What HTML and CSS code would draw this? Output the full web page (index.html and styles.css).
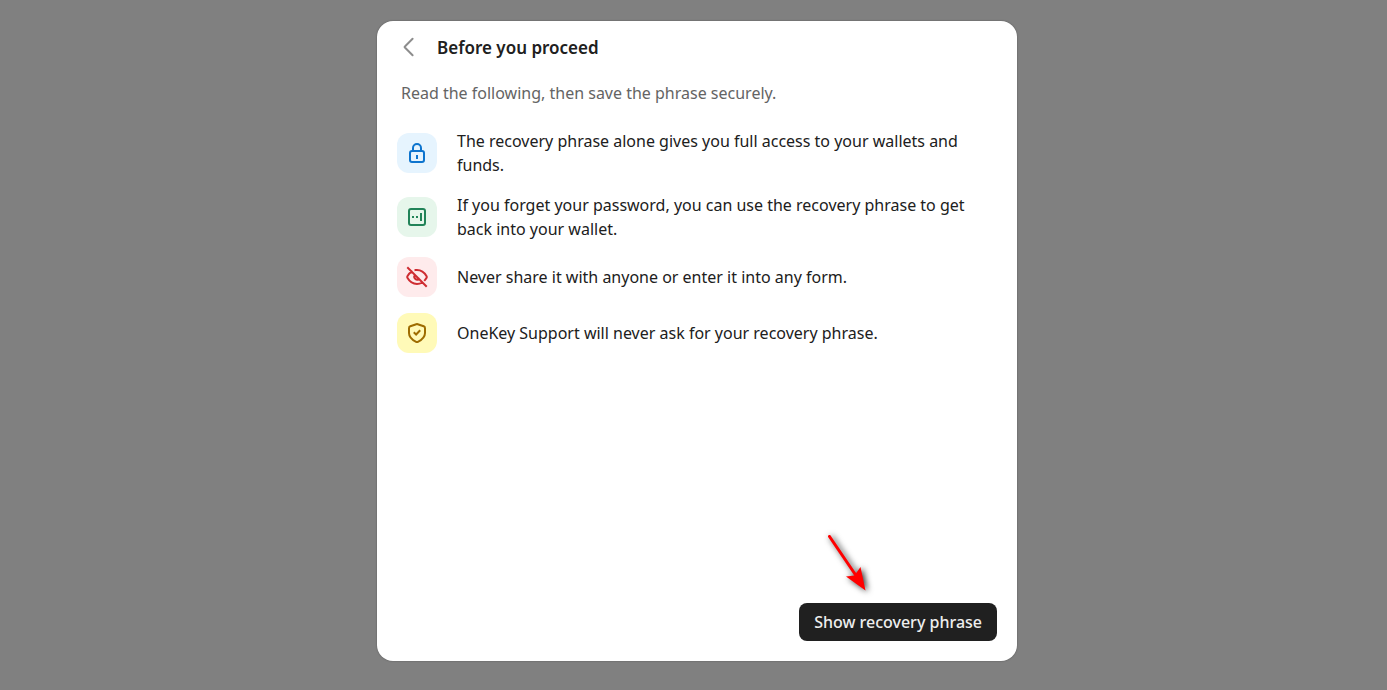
FILE: index.html
```html
<!DOCTYPE html>
<html lang="en">
<head>
<meta charset="utf-8">
<title>Before you proceed</title>
<link rel="stylesheet" href="styles.css">
</head>
<body>
<div class="overlay">
  <main class="dialog">
    <header class="dialog-header">
      <button class="back" type="button" aria-label="Back">
        <svg width="24" height="24" viewBox="0 0 24 24"><path d="M15.600 2.800 7.900 10.400a.8.8 0 0 0 0 1.200l7.700 7.600"/></svg>
      </button>
      <h1 class="title">Before you proceed</h1>
    </header>
    <p class="intro">Read the following, then save the phrase securely.</p>
    <ul class="notes">
      <li class="note">
        <span class="badge blue"><svg width="24" height="24" viewBox="0 0 24 24"><rect x="5" y="10" width="14" height="11" rx="2"/><path d="M8 10V7a4 4 0 0 1 8 0v3M12 15v2"/></svg></span>
        <span class="note-text">The recovery phrase alone gives you full access to your wallets and funds.</span>
      </li>
      <li class="note">
        <span class="badge green"><svg width="24" height="24" viewBox="0 0 24 24"><rect x="4" y="4" width="16" height="16" rx="2"/><path d="M16 9v6"/><path class="dots" d="M7 11h2v2H7zM11 11h2v2h-2z"/></svg></span>
        <span class="note-text">If you forget your password, you can use the recovery phrase to get back into your wallet.</span>
      </li>
      <li class="note">
        <span class="badge red"><svg width="24" height="24" viewBox="0 0 24 24"><path d="M3 3l18 18M6.700 6.700C4.700 7.900 3.300 9.700 2.400 11.200a1.600 1.600 0 0 0 0 1.600C4.100 15.800 7.200 19 12 19c2 0 3.700-.6 5.200-1.500M10.500 5.100C15.900 4.500 19.700 7.900 21.600 11.200a1.600 1.600 0 0 1 0 1.600q-.7 1.200-1.700 2.300M9.900 9.900a3 3 0 0 0 4.200 4.200"/></svg></span>
        <span class="note-text">Never share it with anyone or enter it into any form.</span>
      </li>
      <li class="note">
        <span class="badge yellow"><svg width="24" height="24" viewBox="0 0 24 24"><path d="M11.300 3.200 5.300 5.300A2 2 0 0 0 4 7.200v4.700c0 5 4 7.300 7.100 8.900a2 2 0 0 0 1.800 0c3.100-1.600 7.100-3.900 7.100-8.900V7.200a2 2 0 0 0-1.300-1.900l-6-2.100a2 2 0 0 0-1.400 0ZM9.500 12l1.600 1.500 3.400-3.500"/></svg></span>
        <span class="note-text">OneKey Support will never ask for your recovery phrase.</span>
      </li>
    </ul>
    <footer class="dialog-footer">
      <button class="primary" type="button">Show recovery phrase</button>
      <svg class="pointer" width="60" height="75" viewBox="0 0 60 75" aria-hidden="true"><path class="shaft" d="M14.500 11.500 42 52"/><path class="head" d="M50.500 65.500 31 51.500l8.500-1 6-8.500Z"/></svg>
    </footer>
  </main>
</div>
</body>
</html>
```
FILE: styles.css
```css
* {
  box-sizing: border-box;
}

body {
  margin: 0;
  background: #808080;
  color: #202020;
  font-family: "Noto Sans", "Open Sans", sans-serif;
  font-size: 16px;
  line-height: 24px;
}

svg {
  display: block;
  flex: none;
  fill: none;
  stroke: currentColor;
  stroke-width: 2;
  stroke-linecap: square;
}

.overlay {
  display: flex;
  justify-content: center;
  min-height: 100vh;
  padding: 21px 0 29px 7px;
}

.dialog {
  display: flex;
  flex-direction: column;
  width: 100%;
  max-width: 640px;
  padding: 14px 20px 20px;
  border-radius: 16px;
  background: #fff;
  box-shadow: 0 0 2px rgba(0, 0, 0, 0.35);
}

.dialog-header {
  display: flex;
  align-items: center;
  gap: 16px;
}

.back {
  display: flex;
  padding: 0;
  border: 0;
  background: none;
  color: #8d8d8d;
}

.back svg {
  stroke-linecap: round;
}

.title {
  margin: 0;
  font-size: 17px;
  font-weight: 600;
  line-height: 26px;
}

.intro {
  margin: 20px 4px 24px;
  color: #646464;
}

.notes {
  display: flex;
  flex-direction: column;
  gap: 16px;
  margin: 0;
  padding: 0;
  list-style: none;
}

.note {
  display: flex;
  align-items: center;
  gap: 20px;
}

.badge {
  display: flex;
  flex: none;
  align-items: center;
  justify-content: center;
  width: 40px;
  height: 40px;
  border-radius: 12px;
}

.blue {
  background: #e6f4fe;
  color: #0d74ce;
}

.green {
  background: #e6f6eb;
  color: #218358;
}

.red {
  background: #feebec;
  color: #ce2c31;
}

.yellow {
  background: #fffab8;
  color: #9e6c00;
}

.dots {
  fill: currentColor;
  stroke: none;
}

.dialog-footer {
  position: relative;
  display: flex;
  justify-content: flex-end;
  margin-top: auto;
}

.primary {
  padding: 7px 15px;
  border: 0;
  border-radius: 8px;
  background: #202020;
  color: #eee;
  font: inherit;
  font-weight: 500;
}

.pointer {
  position: absolute;
  right: 122px;
  bottom: 41px;
  overflow: visible;
  filter: drop-shadow(2px 1px 3px rgba(0, 0, 0, 0.85));
}

.shaft {
  stroke: #f00;
  stroke-width: 3;
  stroke-linecap: round;
}

.head {
  fill: #f00;
  stroke: none;
}
```
